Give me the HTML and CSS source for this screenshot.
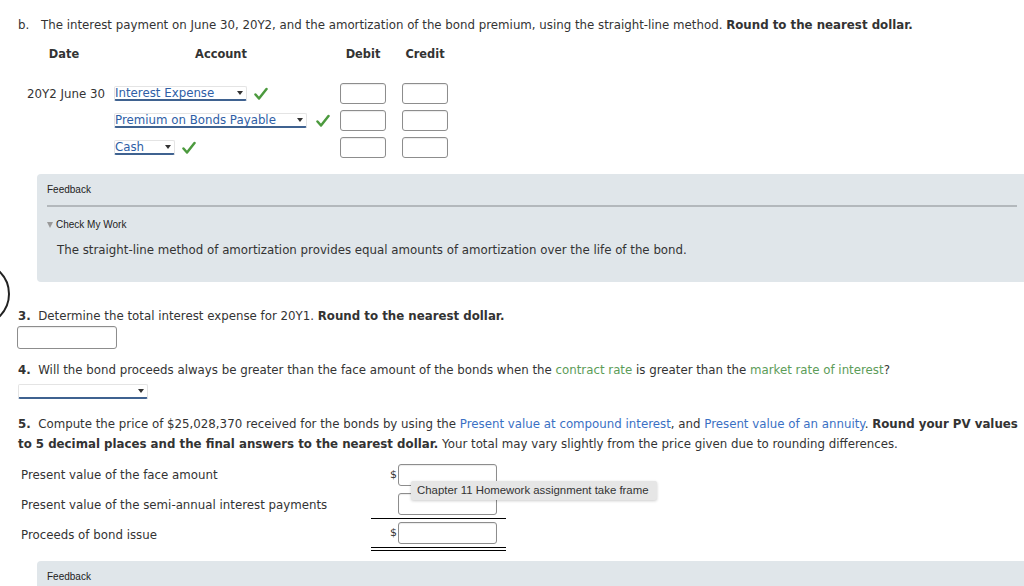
FILE: index.html
```html
<!DOCTYPE html>
<html lang="en">
<head>
  <meta charset="UTF-8">
  <title>Chapter 11 Homework</title>
  <link rel="stylesheet" href="styles.css">
</head>
<body>
  <div class="page">
    <!-- part b -->
    <div class="part">
      <span class="part-label">b.</span>
      <span>The interest payment on June 30, 20Y2, and the amortization of the bond premium, using the straight-line method. <strong>Round to the nearest dollar.</strong></span>
    </div>

    <div class="journal">
      <div class="jh">Date</div>
      <div class="jh">Account</div>
      <div class="jh">Debit</div>
      <div class="jh">Credit</div>

      <div class="gap-row"></div>

      <div class="jdate">20Y2 June 30</div>
      <div class="jacct">
        <span class="dd w-ie">Interest Expense<i class="caret"></i></span>
        <svg class="check" width="14" height="14" viewBox="0 0 14 14"><path d="M1.5 7.5 L5 11.5 L12.5 2" fill="none" stroke="#4c9a3e" stroke-width="2.5" stroke-linecap="round" stroke-linejoin="round"/></svg>
      </div>
      <div class="jamt"><span class="box"></span></div>
      <div class="jamt"><span class="box"></span></div>

      <div class="jdate"></div>
      <div class="jacct">
        <span class="dd w-pb">Premium on Bonds Payable<i class="caret"></i></span>
        <svg class="check c2" width="14" height="14" viewBox="0 0 14 14"><path d="M1.5 7.5 L5 11.5 L12.5 2" fill="none" stroke="#4c9a3e" stroke-width="2.5" stroke-linecap="round" stroke-linejoin="round"/></svg>
      </div>
      <div class="jamt"><span class="box"></span></div>
      <div class="jamt"><span class="box"></span></div>

      <div class="jdate"></div>
      <div class="jacct">
        <span class="dd w-cash">Cash<i class="caret"></i></span>
        <svg class="check" width="14" height="14" viewBox="0 0 14 14"><path d="M1.5 7.5 L5 11.5 L12.5 2" fill="none" stroke="#4c9a3e" stroke-width="2.5" stroke-linecap="round" stroke-linejoin="round"/></svg>
      </div>
      <div class="jamt"><span class="box"></span></div>
      <div class="jamt"><span class="box"></span></div>
    </div>

    <div class="feedback">
      <div class="fb-title">Feedback</div>
      <div class="fb-rule"></div>
      <div class="fb-toggle"><span class="tri"></span>Check My Work</div>
      <div class="fb-text">The straight-line method of amortization provides equal amounts of amortization over the life of the bond.</div>
    </div>

    <!-- question 3 -->
    <div class="q q3"><strong>3.</strong>&nbsp; Determine the total interest expense for 20Y1. <strong>Round to the nearest dollar.</strong></div>
    <span class="box wide"></span>

    <!-- question 4 -->
    <div class="q q4"><strong>4.</strong>&nbsp; Will the bond proceeds always be greater than the face amount of the bonds when the <span class="g">contract rate</span> is greater than the <span class="g">market rate of interest</span>?</div>
    <span class="dd w-q4"><i class="caret"></i></span>

    <!-- question 5 -->
    <div class="q q5"><strong>5.</strong>&nbsp; Compute the price of $25,028,370 received for the bonds by using the <span class="b">Present value at compound interest</span>, and <span class="b">Present value of an annuity</span>. <strong>Round your PV values to 5 decimal places and the final answers to the nearest dollar.</strong> Your total may vary slightly from the price given due to rounding differences.</div>

    <div class="pv">
      <div class="pv-label l1">Present value of the face amount</div>
      <div class="pv-amt r1"><span class="cur">$</span><span class="box pvbox"></span></div>

      <div class="pv-label">Present value of the semi-annual interest payments</div>
      <div class="pv-amt r2"><span class="cur"></span><span class="box pvbox"></span></div>

      <div class="pv-label">Proceeds of bond issue</div>
      <div class="pv-amt r3"><span class="cur">$</span><span class="box pvbox"></span></div>
    </div>

    <div class="feedback fb2">
      <div class="fb-title">Feedback</div>
    </div>
  </div>

  <div class="arc"></div>
  <div class="tooltip">Chapter 11 Homework assignment take frame</div>
</body>
</html>
```

FILE: styles.css
```css
html, body {
  margin: 0;
  height: 100%;
}
body {
  position: relative;
  overflow: hidden;
  background: #fff;
  color: #333;
  font-family: "DejaVu Sans", Verdana, sans-serif;
  font-size: 11.8px;
  line-height: 18px;
}
.page {
  width: 1000px;
  padding: 16px 0 0 18px;
}
strong { font-weight: bold; }

.part {
  display: flex;
}
.part-label {
  width: 23px;
  flex: none;
}

/* journal grid */
.journal {
  display: grid;
  grid-template-columns: 92px 222px 62px 62px;
  grid-template-rows: 27px 13px;
  grid-auto-rows: 27px;
  margin-top: 6px;
}
.jh {
  font-weight: bold;
  font-size: 11.4px;
  text-align: center;
  align-self: center;
}
.gap-row {
  grid-column: 1 / -1;
  grid-row: 2;
}
.jdate {
  text-align: right;
  padding-right: 5px;
  align-self: center;
}
.jacct {
  display: flex;
  align-items: center;
  padding-left: 4px;
}
.jamt {
  display: flex;
  align-items: center;
  justify-content: center;
}

/* fake select */
.dd {
  display: inline-flex;
  align-items: center;
  box-sizing: border-box;
  height: 15px;
  line-height: 13px;
  border: 1px solid #e4e4e4;
  border-bottom: 2px solid #3f6290;
  border-radius: 2px;
  color: #2e5ea6;
  padding: 0 3px 0 0;
  background: #fff;
}
.caret {
  margin-left: auto;
  width: 0;
  height: 0;
  border-left: 3.5px solid transparent;
  border-right: 3.5px solid transparent;
  border-top: 4px solid #333;
}
.w-ie { width: 133px; }
.w-pb { width: 193px; }
.w-cash { width: 61px; }
.w-q4 { width: 130px; margin-top: 5px; }

.check { margin-left: 7px; }
.check.c2 { margin-left: 9px; }

.box {
  display: inline-block;
  box-sizing: border-box;
  width: 46px;
  height: 21px;
  border: 1px solid #8d8d8d;
  border-radius: 3px;
  background: #fff;
  box-shadow: inset 0 1px 1px rgba(0,0,0,0.08);
}

/* feedback panel */
.feedback {
  margin: 13px 0 0 19px;
  width: 990px;
  box-sizing: border-box;
  background: #e0e6ea;
  border-radius: 4px;
  padding: 10px 10px 23px;
}
.fb-title, .fb-toggle {
  font-family: "Liberation Sans", Arial, sans-serif;
  font-size: 10px;
  line-height: 12px;
  color: #222;
}
.fb-rule {
  height: 2px;
  margin-top: 9px;
  background: #b3b8bc;
}
.fb-toggle {
  margin-top: 12px;
  display: flex;
  align-items: center;
}
.tri {
  width: 0;
  height: 0;
  border-left: 3px solid transparent;
  border-right: 3px solid transparent;
  border-top: 6px solid #999;
  margin-right: 3px;
}
.fb-text {
  margin-top: 10px;
  padding-left: 10px;
}
.fb2 {
  margin-top: 10px;
  height: 40px;
}

/* questions */
.q3 { margin-top: 25px; }
.box.wide {
  display: block;
  width: 100px;
  height: 23px;
  margin: 1px 0 0 -1px;
}
.q4 { margin-top: 12px; }
.q5 {
  margin-top: 15px;
  line-height: 20px;
}
.g { color: #5c9c58; }
.b { color: #3a70c4; }

/* present value table */
.pv {
  display: grid;
  grid-template-columns: 353px 135px;
  margin-top: 10px;
}
.pv-label {
  display: flex;
  align-items: center;
  padding-left: 3px;
}
.pv-label.l1 { padding-bottom: 4px; }
.pv-amt {
  display: flex;
  align-items: center;
  padding-left: 19px;
}
.cur {
  width: 8px;
  font-size: 11px;
}
.pvbox {
  width: 99px;
  height: 22px;
}
.r1 { padding-bottom: 4px; }
.r2 { padding-top: 3px; padding-bottom: 3px; border-bottom: 1px solid #000; }
.r3 { padding-top: 3px; padding-bottom: 3px; border-bottom: 4px double #000; }

/* overlays */
.arc {
  position: absolute;
  left: -54px;
  top: 262px;
  width: 60px;
  height: 60px;
  border: 2px solid #222;
  border-radius: 50%;
}
.tooltip {
  position: absolute;
  left: 411px;
  top: 481px;
  width: 246px;
  height: 19px;
  box-sizing: border-box;
  padding-left: 6px;
  background: #e6e6e6;
  border-radius: 2px;
  box-shadow: 0 1px 3px rgba(0,0,0,0.2);
  font-family: "Liberation Sans", Arial, sans-serif;
  font-size: 11.4px;
  line-height: 19px;
  color: #333;
}
```
